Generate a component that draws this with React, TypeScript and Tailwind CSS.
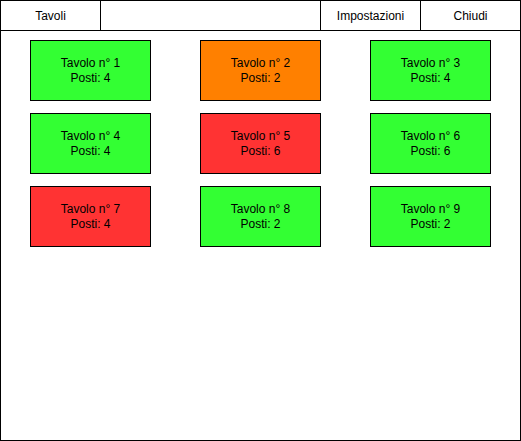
import React from "react";

const tables = [
  { n: 1, posti: 4, color: "bg-[#33ff33]" },
  { n: 2, posti: 2, color: "bg-[#ff8000]" },
  { n: 3, posti: 4, color: "bg-[#33ff33]" },
  { n: 4, posti: 4, color: "bg-[#33ff33]" },
  { n: 5, posti: 6, color: "bg-[#ff3333]" },
  { n: 6, posti: 6, color: "bg-[#33ff33]" },
  { n: 7, posti: 4, color: "bg-[#ff3333]" },
  { n: 8, posti: 2, color: "bg-[#33ff33]" },
  { n: 9, posti: 2, color: "bg-[#33ff33]" },
];

export default function App() {
  return (
    <div
      className="w-[521px] h-[441px] border border-black bg-white text-[12px] text-black flex flex-col"
      style={{ fontFamily: '"Liberation Sans", Arial, sans-serif' }}
    >
      <div className="flex h-[30px] border-b border-black shrink-0">
        <div className="w-[100px] border-r border-black flex items-center justify-center">Tavoli</div>
        <div className="w-[220px] border-r border-black"></div>
        <div className="w-[100px] border-r border-black flex items-center justify-center">Impostazioni</div>
        <div className="flex-1 flex items-center justify-center">Chiudi</div>
      </div>
      <div className="pl-[29px] pt-[9px] grid grid-cols-[121px_121px_121px] gap-x-[49px] gap-y-[12px]">
        {tables.map((t) => (
          <div
            key={t.n}
            className={`${t.color} w-[121px] h-[61px] border border-black flex flex-col items-center justify-center leading-[15px]`}
          >
            <div>Tavolo n° {t.n}</div>
            <div>Posti: {t.posti}</div>
          </div>
        ))}
      </div>
    </div>
  );
}
